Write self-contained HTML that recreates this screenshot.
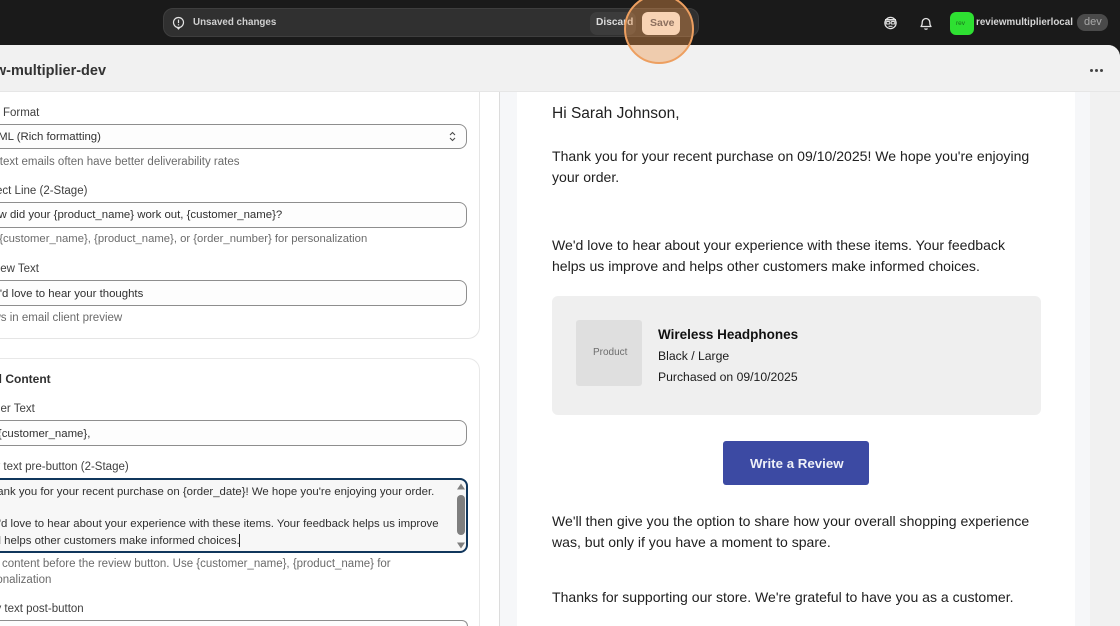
<!DOCTYPE html>
<html><head><meta charset="utf-8"><style>
html,body{margin:0;padding:0;width:1120px;height:626px;overflow:hidden;background:#1a1a1a}
body{position:relative;font-family:"Liberation Sans",sans-serif;color:#303030}
div,span{position:absolute;box-sizing:border-box}
.t{white-space:nowrap;line-height:16px;font-size:12px;-webkit-font-smoothing:antialiased}
.l{color:#3f3f3f;font-size:11.5px}
.h{color:#6b6b6b;font-size:11.5px}
.i{left:-12px;width:479px;background:#fdfdfd;border:1px solid #8e8e8e;border-radius:8px}
.e{font-size:14.05px;color:#202020;line-height:21px;white-space:nowrap;left:552px}
</style></head><body>
<div style="left:163px;top:8px;width:536px;height:29px;background:#303030;border:1px solid #3e3e3e;border-radius:10px"></div>
<svg style="position:absolute;left:172px;top:16px" width="13" height="14" viewBox="0 0 13 14"><circle cx="6.5" cy="6.5" r="5" fill="none" stroke="#e3e3e3" stroke-width="1.2"/><path d="M5 11.3L6.5 13L8 11.3" fill="none" stroke="#e3e3e3" stroke-width="1.1"/><path d="M6.5 3.6v3.5M6.5 8.2v1.2" stroke="#e3e3e3" stroke-width="1.2"/></svg>
<div class="t" style="left:193px;top:15px;font-size:9.8px;font-weight:bold;color:#d0d0d0">Unsaved changes</div>
<div style="left:590px;top:12px;width:46px;height:23px;background:#3c3c3c;border-radius:7px"></div>
<div class="t" style="left:596px;top:15px;font-size:10.2px;font-weight:bold;color:#dcdcdc">Discard</div>

<svg style="position:absolute;left:883px;top:15px" width="15" height="16" viewBox="0 0 15 16"><circle cx="7.5" cy="8" r="5.6" fill="none" stroke="#e3e3e3" stroke-width="1.3"/><path d="M2 4.8h11" stroke="#e3e3e3" stroke-width="1.6"/><rect x="3.2" y="6.6" width="3.6" height="2.4" rx=".8" fill="none" stroke="#e3e3e3" stroke-width="1.1"/><rect x="8.2" y="6.6" width="3.6" height="2.4" rx=".8" fill="none" stroke="#e3e3e3" stroke-width="1.1"/><path d="M5.5 11.3h4" stroke="#e3e3e3" stroke-width="1.1"/></svg>
<svg style="position:absolute;left:919px;top:15px" width="14" height="16" viewBox="0 0 14 16"><path d="M2 11.5c1-1 1.2-2 1.2-4.2a3.8 3.8 0 0 1 7.6 0c0 2.2.2 3.2 1.2 4.2z" fill="none" stroke="#e3e3e3" stroke-width="1.3" stroke-linejoin="round"/><path d="M5.5 13.5c.8 1 2.2 1 3 0" fill="none" stroke="#e3e3e3" stroke-width="1.3"/></svg>
<div style="left:950px;top:12px;width:24px;height:23px;background:#2ee032;border-radius:6px"></div>
<div class="t" style="left:956px;top:16px;font-size:6.5px;color:#1a6b1c">rev</div>
<div class="t" style="left:976px;top:15px;font-size:9.8px;font-weight:bold;color:#d6d6d6">reviewmultiplierlocal</div>
<div style="left:1077px;top:14px;width:31px;height:17px;background:#4a4a4a;border-radius:8px"></div>
<div class="t" style="left:1084px;top:14px;font-size:11px;color:#a8a8a8">dev</div>

<div style="left:0;top:45px;width:1120px;height:581px;background:#f1f1f1;border-top-right-radius:12px;overflow:hidden"></div>

<div style="left:0;top:92px;width:500px;height:534px;background:#fff"></div>
<div style="left:-12px;top:80px;width:491.5px;height:258.5px;border:1px solid #e5e5e5;border-radius:12px;background:#fff"></div>
<div style="left:-12px;top:358px;width:491.5px;height:268px;border:1px solid #e8e8e8;border-bottom:0;border-radius:12px 12px 0 0;background:#fff"></div>
<div style="left:499px;top:92px;width:1px;height:534px;background:#dcdcdc"></div>
<div style="left:500px;top:92px;width:590px;height:534px;background:#f6f7f9"></div>
<div style="left:517px;top:92px;width:558px;height:534px;background:#fff"></div>

<div style="left:0;top:45px;width:1120px;height:47px;background:#f1f1f1;border-bottom:1px solid #e6e6e6;border-top-right-radius:12px"></div>
<div class="t" style="left:-39px;top:62px;font-size:14.5px;line-height:18px;font-weight:bold;color:#333">review-multiplier-dev</div>
<div style="left:1090px;top:69px;width:3px;height:3px;background:#444;border-radius:50%"></div>
<div style="left:1095px;top:69px;width:3px;height:3px;background:#444;border-radius:50%"></div>
<div style="left:1100px;top:69px;width:3px;height:3px;background:#444;border-radius:50%"></div>

<div class="t l" style="left:-29px;top:105px">Email Format</div>
<div class="i" style="top:124px;height:25px"></div>
<div class="t" style="left:-17px;top:129px;font-size:11.4px">HTML (Rich formatting)</div>
<svg style="position:absolute;left:448px;top:130px" width="9" height="13" viewBox="0 0 9 13"><path d="M2 5l2.5-2.5L7 5M2 8l2.5 2.5L7 8" fill="none" stroke="#4a4a4a" stroke-width="1.1"/></svg>
<div class="t h" style="left:-29px;top:154px">Plain text emails often have better deliverability rates</div>

<div class="t l" style="left:-27px;top:183px">Subject Line (2-Stage)</div>
<div class="i" style="top:202px;height:26px"></div>
<div class="t" style="left:-16px;top:207px;font-size:11.4px">How did your {product_name} work out, {customer_name}?</div>
<div class="t h" style="left:-24px;top:231px;font-size:11.3px">Use {customer_name}, {product_name}, or {order_number} for personalization</div>

<div class="t l" style="left:-26px;top:261px">Preview Text</div>
<div class="i" style="top:280px;height:26px"></div>
<div class="t" style="left:-17px;top:286px;font-size:11.4px">We'd love to hear your thoughts</div>
<div class="t h" style="left:-28px;top:310px">Shows in email client preview</div>

<div class="t" style="left:-30px;top:371px;font-size:12px;font-weight:bold;color:#303030">Email Content</div>
<div class="t l" style="left:-27px;top:401px">Header Text</div>
<div class="i" style="top:420px;height:26px"></div>
<div class="t" style="left:-16px;top:426px;font-size:11.4px">Hi {customer_name},</div>
<div class="t l" style="left:-26px;top:459px">Body text pre-button (2-Stage)</div>
<div style="left:-12px;top:478px;width:480px;height:75px;background:#f7f7f7;border:2px solid #10365c;border-radius:8px"></div>
<div class="t" style="left:-16px;top:484px;font-size:11.4px">Thank you for your recent purchase on {order_date}! We hope you're enjoying your order.</div>
<div class="t" style="left:-18px;top:516px;font-size:11.4px">We'd love to hear about your experience with these items. Your feedback helps us improve</div>
<div class="t" style="left:-18px;top:533px;font-size:11.4px">and helps other customers make informed choices.</div>
<div style="left:239px;top:534px;width:1px;height:13px;background:#222"></div>
<div style="left:457px;top:495px;width:8px;height:40px;background:#7f7f7f;border-radius:4px"></div>
<svg style="position:absolute;left:456px;top:482px" width="10" height="68" viewBox="0 0 10 68"><path d="M1 7.5L5 1.5 9 7.5zM1 60.5L5 66.5 9 60.5z" fill="#7f7f7f"/></svg>
<div class="t h" style="left:-30px;top:556px">Email content before the review button. Use {customer_name}, {product_name} for</div>
<div class="t h" style="left:-26px;top:572px">personalization</div>
<div class="t l" style="left:-25px;top:601px">Body text post-button</div>
<div style="left:-12px;top:620px;width:480px;height:6px;background:#fdfdfd;border:1px solid #8e8e8e;border-bottom:0;border-radius:8px 8px 0 0"></div>

<div class="e" style="top:103px;font-size:15.5px">Hi Sarah Johnson,</div>
<div class="e" style="top:146px">Thank you for your recent purchase on 09/10/2025! We hope you're enjoying</div>
<div class="e" style="top:167px">your order.</div>
<div class="e" style="top:235px">We'd love to hear about your experience with these items. Your feedback</div>
<div class="e" style="top:256px">helps us improve and helps other customers make informed choices.</div>
<div style="left:552px;top:296px;width:489px;height:119px;background:#efefef;border-radius:6px"></div>
<div style="left:576px;top:320px;width:66px;height:66px;background:#dfdfdf;border-radius:3px"></div>
<div class="t" style="left:593px;top:345px;font-size:10px;color:#6d6d6d">Product</div>
<div class="t" style="left:658px;top:327px;font-size:13.5px;font-weight:bold;color:#111">Wireless Headphones</div>
<div class="t" style="left:658px;top:348px;font-size:12.2px;color:#1c1c1c">Black / Large</div>
<div class="t" style="left:658px;top:369px;font-size:12.2px;color:#1c1c1c">Purchased on 09/10/2025</div>
<div style="left:723px;top:441px;width:146px;height:44px;background:#3c4aa3;border-radius:3px"></div>
<div class="t" style="left:750px;top:456px;font-size:13.3px;font-weight:bold;color:#eef0f8">Write a Review</div>
<div class="e" style="top:511px">We'll then give you the option to share how your overall shopping experience</div>
<div class="e" style="top:532px">was, but only if you have a moment to spare.</div>
<div class="e" style="top:587px">Thanks for supporting our store. We're grateful to have you as a customer.</div>

<div style="left:624px;top:-6px;width:70px;height:70px;border-radius:50%;background:rgba(238,150,75,.4);border:2.5px solid #ed9f60"></div>
<div style="left:642px;top:12px;width:38px;height:23px;background:#f8d3b4;border-radius:6px"></div>
<div class="t" style="left:650px;top:15px;font-size:10.5px;font-weight:bold;color:#8c6f5e">Save</div>
</body></html>
